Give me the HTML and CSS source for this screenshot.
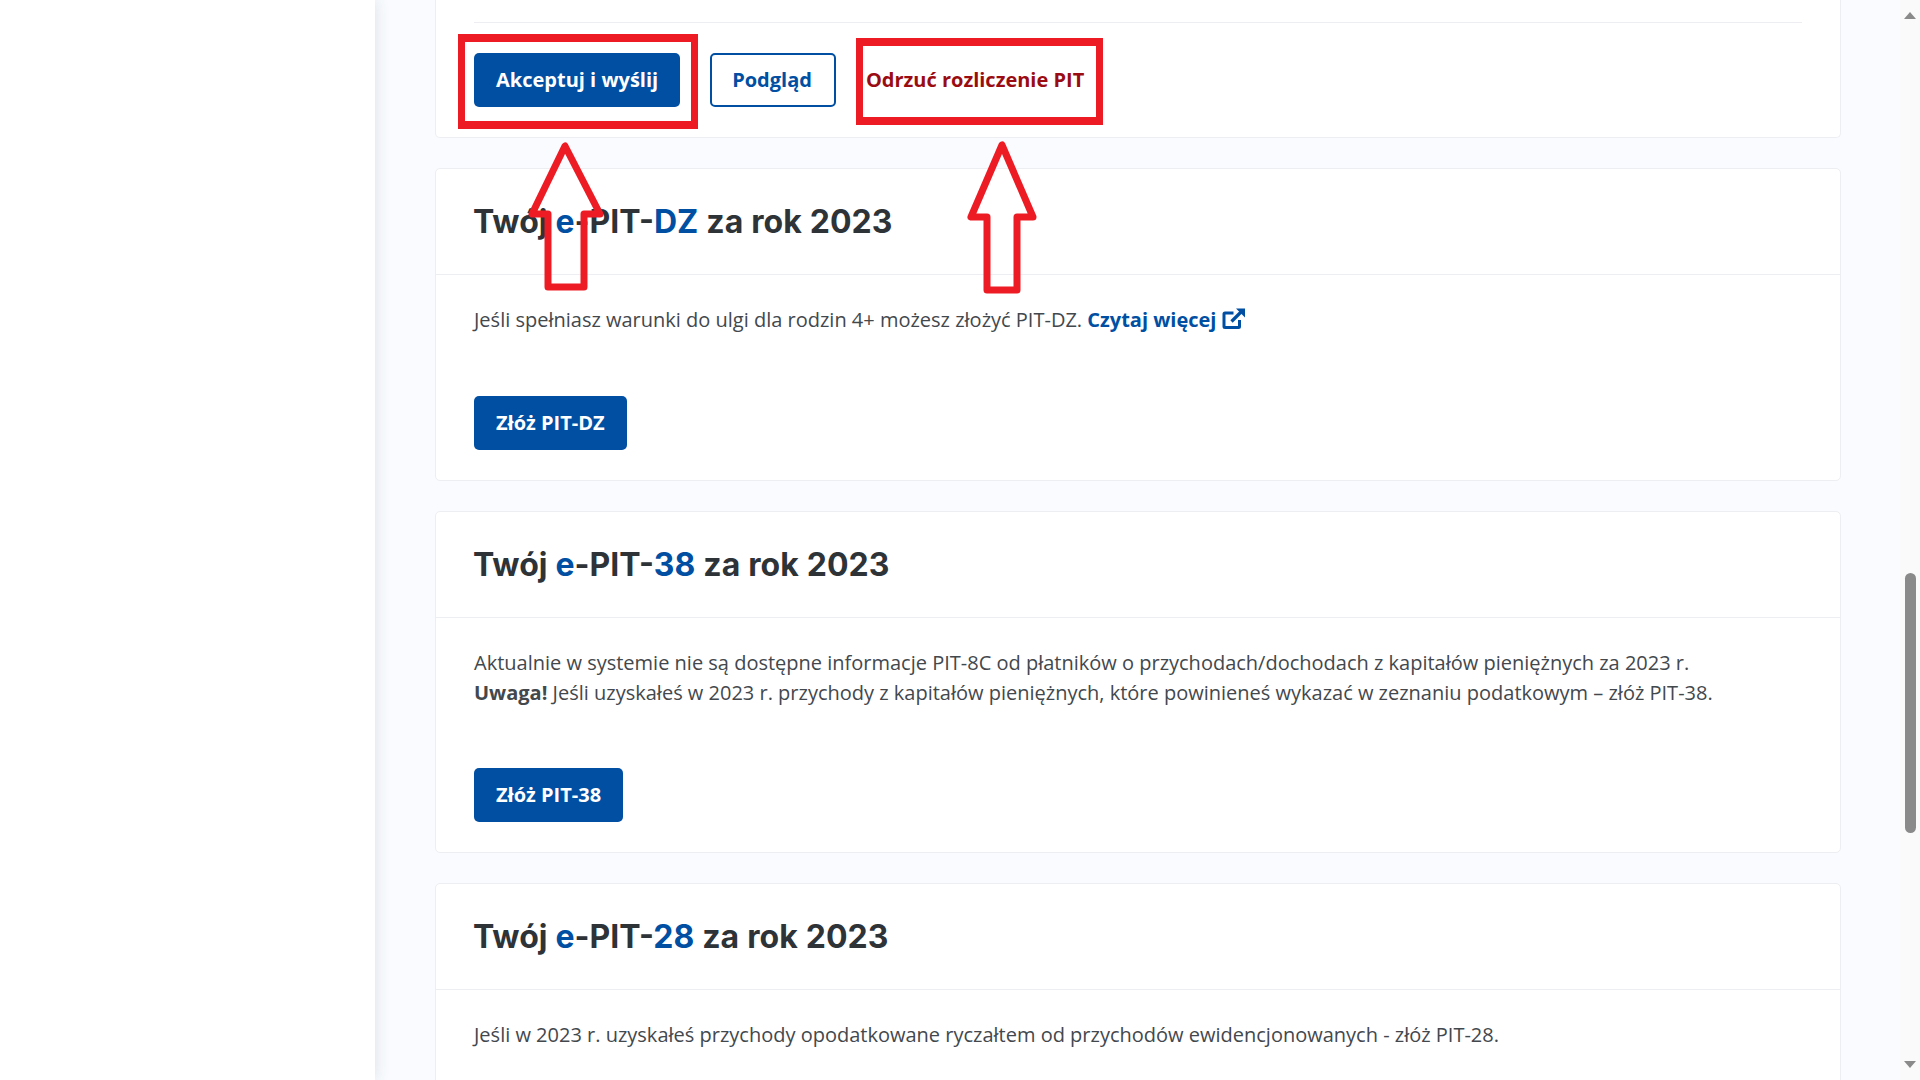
FILE: index.html
```html
<!DOCTYPE html>
<html lang="pl">
<head>
  <meta charset="UTF-8">
  <title>Twój e-PIT</title>
  <link rel="stylesheet" href="styles.css">
</head>
<body>
  <div class="layout">
    <aside class="sidebar"></aside>

    <main class="content">
      <section class="card card-cut">
        <hr class="divider">
        <div class="actions">
          <a class="btn btn-primary">Akceptuj i wyślij</a>
          <a class="btn btn-outline">Podgląd</a>
          <a class="btn btn-reject">Odrzuć rozliczenie PIT</a>
        </div>
      </section>

      <section class="card">
        <h2 class="card-title">Twój <span class="blue">e</span>-PIT-<span class="blue">DZ</span> za rok 2023</h2>
        <div class="card-body">
          <p>Jeśli spełniasz warunki do ulgi dla rodzin 4+ możesz złożyć PIT-DZ.
            <a class="more">Czytaj więcej
              <svg class="ext-icon" viewBox="0 0 24 24" width="24" height="24" aria-hidden="true">
                <path d="M17.5 13v6.5a1 1 0 0 1-1 1H3a1 1 0 0 1-1-1V7a1 1 0 0 1 1-1h8.5" fill="none" stroke="currentColor" stroke-width="3"/>
                <path d="M9.5 14.5 20 4" fill="none" stroke="currentColor" stroke-width="3.2"/>
                <path d="M14 1.5h9v9z" fill="currentColor"/>
              </svg>
            </a>
          </p>
          <a class="btn btn-primary">Złóż PIT-DZ</a>
        </div>
      </section>

      <section class="card">
        <h2 class="card-title">Twój <span class="blue">e</span>-PIT-<span class="blue">38</span> za rok 2023</h2>
        <div class="card-body">
          <p>Aktualnie w systemie nie są dostępne informacje PIT-8C od płatników o przychodach/dochodach z kapitałów pieniężnych za 2023 r.<br>
            <strong>Uwaga!</strong> Jeśli uzyskałeś w 2023 r. przychody z kapitałów pieniężnych, które powinieneś wykazać w zeznaniu podatkowym – złóż PIT-38.</p>
          <a class="btn btn-primary">Złóż PIT-38</a>
        </div>
      </section>

      <section class="card">
        <h2 class="card-title">Twój <span class="blue">e</span>-PIT-<span class="blue">28</span> za rok 2023</h2>
        <div class="card-body">
          <p>Jeśli w 2023 r. uzyskałeś przychody opodatkowane ryczałtem od przychodów ewidencjonowanych - złóż PIT-28.</p>
        </div>
      </section>
    </main>

    <div class="scrollbar">
      <span class="arrow-up"></span>
      <span class="thumb"></span>
      <span class="arrow-down"></span>
    </div>
  </div>

  <!-- red markers drawn over the screenshot -->
  <div class="mark mark-accept"></div>
  <div class="mark mark-reject"></div>
  <svg class="mark-arrows" viewBox="0 0 1920 1080" width="1920" height="1080" aria-hidden="true">
    <polygon points="565,146 532,214 548,214 548,287 584,287 584,214 600,214" />
    <polygon points="1002,145 971,217 987,217 987,290 1017,290 1017,217 1033,217" />
  </svg>
</body>
</html>
```

FILE: styles.css
```css
html, body {
  margin: 0;
  padding: 0;
  height: 100%;
  overflow: hidden;
}

body {
  font-family: 'Open Sans', sans-serif;
  font-size: 20px;
  line-height: 29.8px;
  color: #43484d;
  background: #fff;
}

.layout {
  display: flex;
  height: 1080px;
}

.sidebar {
  width: 375px;
  flex-shrink: 0;
  background: #fff;
  box-shadow: 0 0 14px rgba(60, 80, 110, 0.16);
  position: relative;
}

.content {
  flex: 1;
  background: #f9fbfe;
  padding: 0 59px 0 60px;
  overflow: hidden;
}

.card {
  background: #fff;
  border: 1px solid #eceef2;
  border-radius: 5px;
  margin-bottom: 30px;
}

.card-cut {
  border-top: 0;
  border-radius: 0 0 5px 5px;
  padding: 22px 38px 0;
  height: 115px;
  box-sizing: content-box;
}

.divider {
  border: 0;
  border-top: 1px solid #eceef2;
  margin: 0;
}

.actions {
  display: flex;
  align-items: center;
  margin-top: 30px;
}

.btn {
  display: inline-block;
  box-sizing: border-box;
  height: 54px;
  line-height: 54px;
  padding: 0 22px;
  border-radius: 5px;
  font-weight: 700;
  font-size: 20px;
  white-space: nowrap;
}

.btn-primary {
  background: #004fa3;
  color: #fff;
}

.btn-outline {
  margin-left: 30px;
  border: 2px solid #004fa3;
  line-height: 50px;
  padding: 0 22px 0 20px;
  color: #004fa3;
}

.btn-reject {
  margin-left: 8px;
  color: #9b0c12;
}

.card-title {
  margin: 0;
  padding: 35px 38px 34px 37px;
  font-family: 'Inter', sans-serif;
  font-size: 32px;
  line-height: 36px;
  font-weight: 700;
  word-spacing: 0.5px;
  color: #2e3338;
  border-bottom: 1px solid #eceef2;
}

.blue {
  color: #004fa3;
}

.card-body {
  padding: 30px 38px;
}

.card-body p {
  margin: 0 0 61px;
}

.more {
  color: #004fa3;
  font-weight: 700;
  white-space: nowrap;
}

.ext-icon {
  vertical-align: -4px;
}

.scrollbar {
  width: 20px;
  flex-shrink: 0;
  background: #fafafa;
  display: flex;
  flex-direction: column;
  align-items: center;
  padding-top: 12px;
  box-sizing: border-box;
}

.arrow-up {
  width: 0;
  height: 0;
  border-left: 6px solid transparent;
  border-right: 6px solid transparent;
  border-bottom: 7px solid #8a8a8a;
}

.thumb {
  width: 11px;
  height: 260px;
  margin-top: 554px;
  border-radius: 6px;
  background: #8a8a8a;
}

.arrow-down {
  width: 0;
  height: 0;
  margin-top: 228px;
  border-left: 6px solid transparent;
  border-right: 6px solid transparent;
  border-top: 7px solid #8a8a8a;
}

/* annotations */
.mark {
  position: absolute;
  box-sizing: border-box;
  border: solid #ed1c24;
  border-width: 8px 7px;
}

.mark-accept {
  left: 458px;
  top: 34px;
  width: 240px;
  height: 95px;
}

.mark-reject {
  left: 856px;
  top: 38px;
  width: 247px;
  height: 87px;
}

.mark-arrows {
  position: absolute;
  left: 0;
  top: 0;
}

.mark-arrows polygon {
  fill: none;
  stroke: #ed1c24;
  stroke-width: 7;
  stroke-linejoin: round;
}
```
